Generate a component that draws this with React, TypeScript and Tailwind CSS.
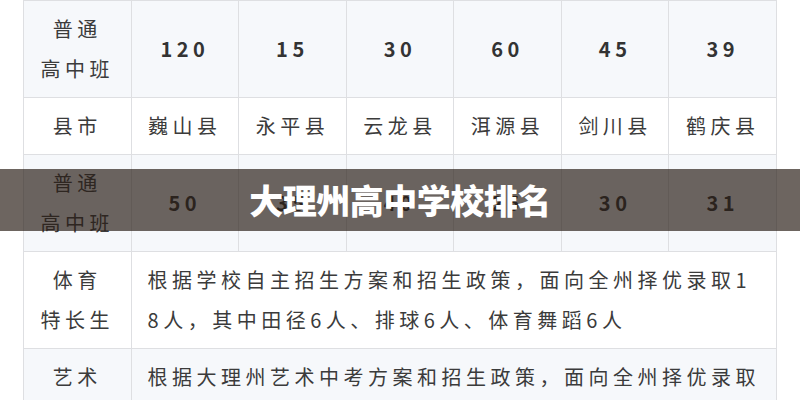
import React from "react"

const cjk = "font-['Noto_Sans_CJK_SC','Noto_Sans',sans-serif]"

interface CellProps {
  children: React.ReactNode
  className?: string
}

function Cell({ children, className = "" }: CellProps) {
  return (
    <div
      className={`flex items-center justify-center border-r border-b border-[#dedfe2] px-2 py-2 text-center text-[20px] leading-[40px] tracking-[4.5px] text-[#3b3b3b] ${className}`}
    >
      {children}
    </div>
  )
}

function NumCell({ value, bg }: { value: string; bg: string }) {
  return (
    <Cell className={`${bg} text-[18px] font-bold tracking-[3.5px] text-[#333333]`}>
      {value}
    </Cell>
  )
}

const counties = ["巍山县", "永平县", "云龙县", "洱源县", "剑川县", "鹤庆县"]
const firstRow = ["120", "15", "30", "60", "45", "39"]
const secondRow = ["50", "35", "40", "25", "30", "31"]

export default function App() {
  const light = "bg-[#f6f8fb]"
  const white = "bg-white"

  return (
    <div className={`relative h-[400px] w-[800px] overflow-hidden bg-white ${cjk}`}>
      <div className="mx-[23px] grid grid-cols-7 border-t border-l border-[#dedfe2]">
        <Cell className={light}>
          <span>
            普通
            <br />
            高中班
          </span>
        </Cell>
        {firstRow.map((v, i) => (
          <NumCell key={"a" + i} value={v} bg={light} />
        ))}

        <Cell className={white}>县市</Cell>
        {counties.map((c) => (
          <Cell key={c} className={white}>
            {c}
          </Cell>
        ))}

        <Cell className={light}>
          <span>
            普通
            <br />
            高中班
          </span>
        </Cell>
        {secondRow.map((v, i) => (
          <NumCell key={"b" + i} value={v} bg={light} />
        ))}

        <Cell className={white}>
          <span>
            体育
            <br />
            特长生
          </span>
        </Cell>
        <div className="col-span-6 border-r border-b border-[#dedfe2] bg-white py-2 pr-2 pl-4 text-left text-[20px] leading-[40px] tracking-[4.5px] break-all text-[#3b3b3b]">
          根据学校自主招生方案和招生政策，面向全州择优录取1
          <br />
          8人，其中田径6人、排球6人、体育舞蹈6人
        </div>

        <Cell className={`${light} items-start`}>艺术</Cell>
        <div className="col-span-6 border-r border-b border-[#dedfe2] bg-[#f6f8fb] py-2 pr-2 pl-4 text-left text-[20px] leading-[40px] tracking-[4.5px] break-all text-[#3b3b3b]">
          根据大理州艺术中考方案和招生政策，面向全州择优录取艺术特长生20人
        </div>
      </div>

      <div className="absolute top-[169px] left-0 flex h-[62px] w-full items-center justify-center bg-[rgba(40,28,20,0.68)]">
        <h1 className="text-[34px] leading-none font-black tracking-[-0.5px] text-white">
          大理州高中学校排名
        </h1>
      </div>
    </div>
  )
}
